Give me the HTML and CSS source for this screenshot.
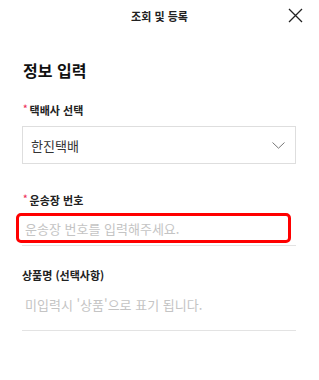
FILE: index.html
```html
<!DOCTYPE html>
<html lang="ko">
<head>
<meta charset="utf-8">
<link rel="stylesheet" href="styles.css">
</head>
<body>
<div class="page">
  <header class="top">
    <span class="top-title">조회 및 등록</span>
    <svg class="close" width="15" height="15" viewBox="0 0 15 15"><path d="M1 1L14 14M14 1L1 14" stroke="#222" stroke-width="1.3" fill="none"/></svg>
  </header>
  <main class="content">
    <h1 class="heading">정보 입력</h1>
    <div class="label"><span class="star">*</span>택배사 선택</div>
    <div class="select">
      <span>한진택배</span>
      <svg width="13" height="7" viewBox="0 0 13 7"><path d="M0.5 0.5L6.5 6.2L12.5 0.5" stroke="#777" stroke-width="1" fill="none"/></svg>
    </div>
    <div class="label label-2"><span class="star">*</span>운송장 번호</div>
    <div class="field field-focus">
      <input class="input input-focus" type="text" placeholder="운송장 번호를 입력해주세요.">
    </div>
    <div class="label label-3">상품명 (선택사항)</div>
    <div class="field field-plain">
      <input class="input input-plain" type="text" placeholder="미입력시 '상품'으로 표기 됩니다.">
    </div>
  </main>
</div>
</body>
</html>
```
FILE: styles.css
```css
* { box-sizing: border-box; }
html, body { margin: 0; padding: 0; background: #fff; }
body {
  font-family: "Noto Sans CJK KR", "Noto Sans", sans-serif;
  color: #222;
}
.page { width: 319px; }
.top {
  position: relative;
  height: 30px;
  display: flex;
  align-items: center;
  justify-content: center;
}
.top-title {
  font-size: 11px;
  font-weight: 700;
  color: #222;
  margin-top: 1px;
}
.close {
  position: absolute;
  left: 288px;
  top: 8px;
}
.content {
  padding: 0 23px 0 22px;
}
.heading {
  margin: 28px 0 0 1px;
  font-size: 16px;
  line-height: 24px;
  font-weight: 700;
  color: #111;
}
.label {
  margin-top: 20px;
  height: 16px;
  line-height: 16px;
  font-size: 11px;
  font-weight: 700;
  color: #222;
  display: flex;
  align-items: center;
}
.star {
  color: #ee3360;
  font-size: 9px;
  margin: 0 2px 0 1px;
  position: relative;
  top: -1px;
}
.select {
  margin-top: 8px;
  height: 38px;
  border: 1px solid #dedede;
  display: flex;
  align-items: center;
  justify-content: space-between;
  padding: 0 10px 0 8px;
  font-size: 13px;
  color: #333;
}
.label-2 { margin-top: 28px; }
.label-3 { margin-top: 21px; }
.field {
  margin-top: 5px;
  border-bottom: 1px solid #e3e3e3;
}
.field-focus { height: 33px; }
.field-plain { height: 43px; }
.input {
  display: block;
  font-family: "Noto Sans CJK KR", "Noto Sans", sans-serif;
  font-size: 13px;
  color: #333;
  background: transparent;
  outline: none;
}
.input::placeholder { color: #c4c4c4; }
.input-focus {
  margin-left: -6px;
  width: 275px;
  height: 30px;
  border: 3px solid #ff0000;
  border-radius: 5px;
  padding: 0 0 0 6px;
}
.input-plain {
  width: 274px;
  height: 32px;
  border: none;
  padding: 0 0 0 3px;
}
```
